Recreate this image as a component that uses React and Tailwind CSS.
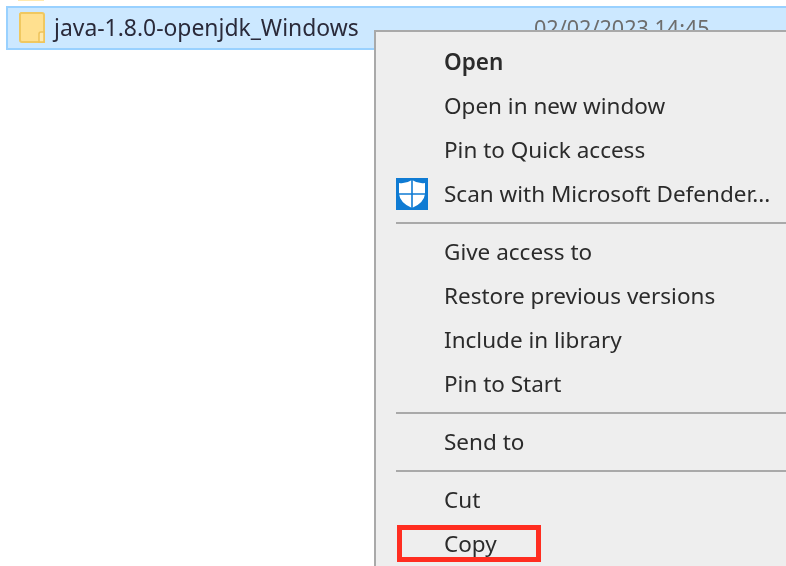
const groups = [
  ['Open', 'Open in new window', 'Pin to Quick access', 'Scan with Microsoft Defender...'],
  ['Give access to', 'Restore previous versions', 'Include in library', 'Pin to Start'],
  ['Send to'],
  ['Cut', 'Copy'],
]

function FolderIcon() {
  return (
    <svg width="28" height="32" viewBox="0 0 28 32" className="shrink-0">
      <path d="M3 1h21a2 2 0 0 1 2 2v27H4a2 2 0 0 1-2-2V2z" fill="#ffe08f" stroke="#f0c860" strokeWidth="2" />
      <path d="M21 30v-8a2 2 0 0 1 2-2h3v10z" fill="#ffe9ad" stroke="#eec25a" strokeWidth="1.5" />
    </svg>
  )
}

function ShieldIcon() {
  return (
    <svg width="32" height="32" viewBox="0 0 32 32" className="shrink-0">
      <rect width="32" height="32" fill="#0f7bd3" />
      <path d="M3 5 Q10 6 16 2 Q22 6 29 5 V16 Q28 25 16 30 Q4 25 3 16z" fill="#fff" />
      <path d="M16 2v28M2 16h28" stroke="#0f7bd3" strokeWidth="1.6" />
    </svg>
  )
}

function MenuItem({ label }) {
  return (
    <div className={`relative h-11 flex items-center whitespace-nowrap ${label === 'Open' ? 'font-semibold' : ''}`}>
      <div className="w-[68px] pl-[20px] shrink-0">
        {label === 'Scan with Microsoft Defender...' && <ShieldIcon />}
      </div>
      {label}
      {label === 'Copy' && (
        <div className="absolute left-[21px] top-[3px] w-[144px] h-[37px] border-[5px] border-[#ff2d20]" />
      )}
    </div>
  )
}

export default function App() {
  return (
    <div className="relative w-[786px] h-[566px] overflow-hidden bg-white text-[#2b2b2b] font-['Noto_Sans',sans-serif] text-[22.5px] blur-[0.4px]">
      <div className="ml-[18px] w-[26px] h-px bg-[#ffe9ad]" />
      <div className="mt-[5px] ml-[6px] h-[44px] flex items-center gap-[8px] pl-[10px] bg-[#cce8ff] border-y-2 border-l-2 border-[#99d1ff] whitespace-nowrap">
        <FolderIcon />
        <span className="w-[472px] text-[22.9px] text-[#2a2a3a]">java-1.8.0-openjdk_Windows</span>
        <span className="text-[21.6px] text-[#6d6d6d]">02/02/2023 14:45</span>
      </div>

      <div className="absolute left-[374px] top-[30px] right-0 bottom-0 bg-[#eeeeee] border-t-2 border-l-2 border-[#a9a9a9] pt-[8px]">
        {groups.map((items, g) => (
          <div key={g}>
            {g > 0 && <div className="ml-[20px] my-[6px] h-[2px] bg-[#a9a9a9]" />}
            {items.map((label) => (
              <MenuItem key={label} label={label} />
            ))}
          </div>
        ))}
      </div>
    </div>
  )
}
